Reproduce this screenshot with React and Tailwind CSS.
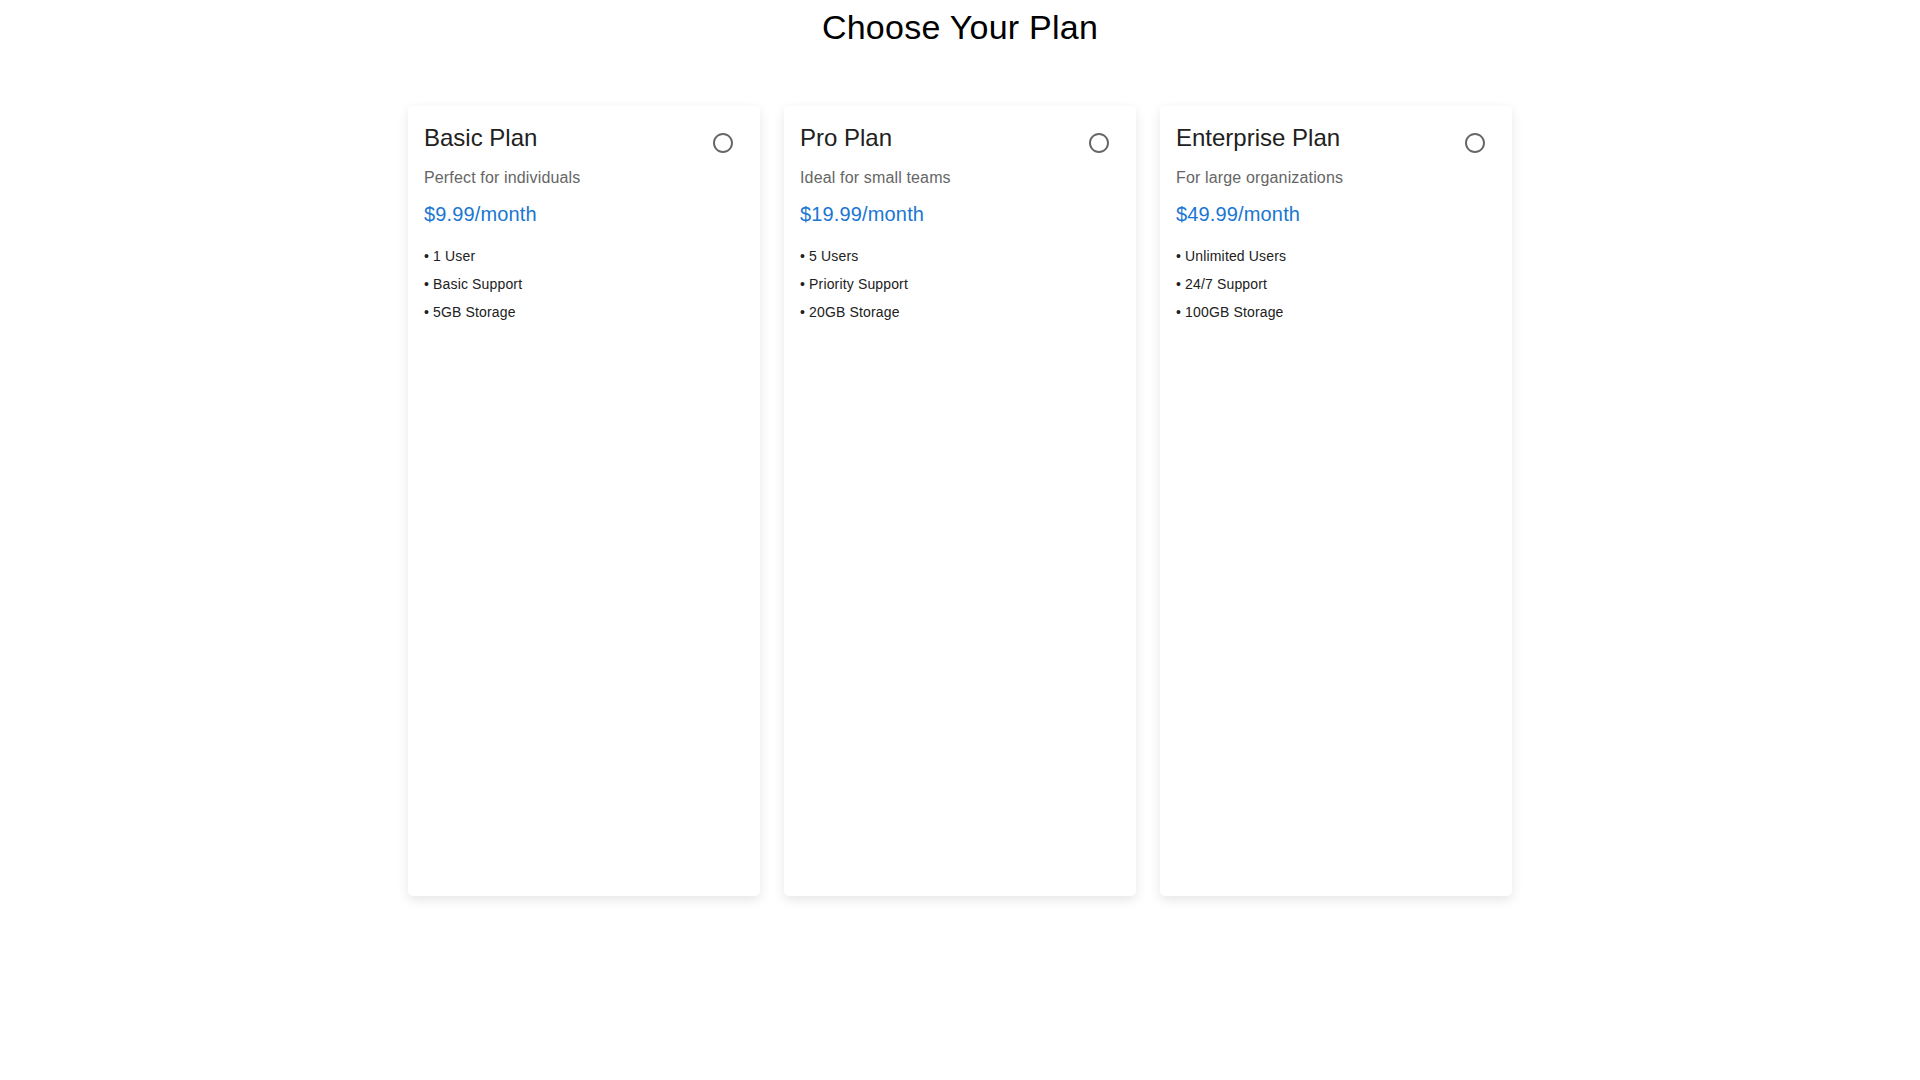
import React from 'react';

const plans = [
    {
        name: 'Basic Plan',
        blurb: 'Perfect for individuals',
        price: '$9.99/month',
        features: ['1 User', 'Basic Support', '5GB Storage'],
    },
    {
        name: 'Pro Plan',
        blurb: 'Ideal for small teams',
        price: '$19.99/month',
        features: ['5 Users', 'Priority Support', '20GB Storage'],
    },
    {
        name: 'Enterprise Plan',
        blurb: 'For large organizations',
        price: '$49.99/month',
        features: ['Unlimited Users', '24/7 Support', '100GB Storage'],
    },
];

// unchecked radio, same shape as the material icon
const RadioIcon = () => (
    <span className="w-[42px] h-[42px] flex items-center justify-center shrink-0">
        <svg width="24" height="24" viewBox="0 0 24 24" fill="rgba(0,0,0,0.6)">
            <path d="M12 2C6.48 2 2 6.48 2 12s4.48 10 10 10 10-4.48 10-10S17.52 2 12 2zm0 18c-4.42 0-8-3.58-8-8s3.58-8 8-8 8 3.58 8 8-3.58 8-8 8z" />
        </svg>
    </span>
);

const PlanCard = ({ plan }) => {
    return (
        <div className="h-[790px] bg-white rounded-[5px] p-4 shadow-[0_4px_12px_rgba(0,0,0,0.1)]">
            {/* Header */}
            <div className="flex justify-between items-start mb-[2px]">
                <h2 className="text-[24px] leading-[32px] text-[#212121]">{plan.name}</h2>
                <RadioIcon />
            </div>

            <p className="text-[16px] leading-[24px] tracking-[0.15px] text-[#666666]">{plan.blurb}</p>
            <p className="mt-2 text-[20px] leading-[32px] tracking-[0.15px] text-[#1976d2]">{plan.price}</p>

            <ul className="mt-4">
                {plan.features.map( ( f ) => (
                    <li key={f} className="text-[14px] leading-[20px] tracking-[0.15px] mb-2 text-[#212121]">• {f}</li>
                ) )}
            </ul>
        </div>
    )
}

const App = () => {
    return (
        <div className="min-h-screen bg-white font-['Liberation_Sans',Arial,sans-serif]">
            <h1 className="pt-[6px] text-center text-[34px] leading-[42px] tracking-[0.25px] text-black">Choose Your Plan</h1>

            <div className="w-[1104px] mx-auto mt-[58px] grid grid-cols-3 gap-6">
                {plans.map( ( p ) => (
                    <PlanCard key={p.name} plan={p} />
                ) )}
            </div>
        </div>
    )
}

export default App
